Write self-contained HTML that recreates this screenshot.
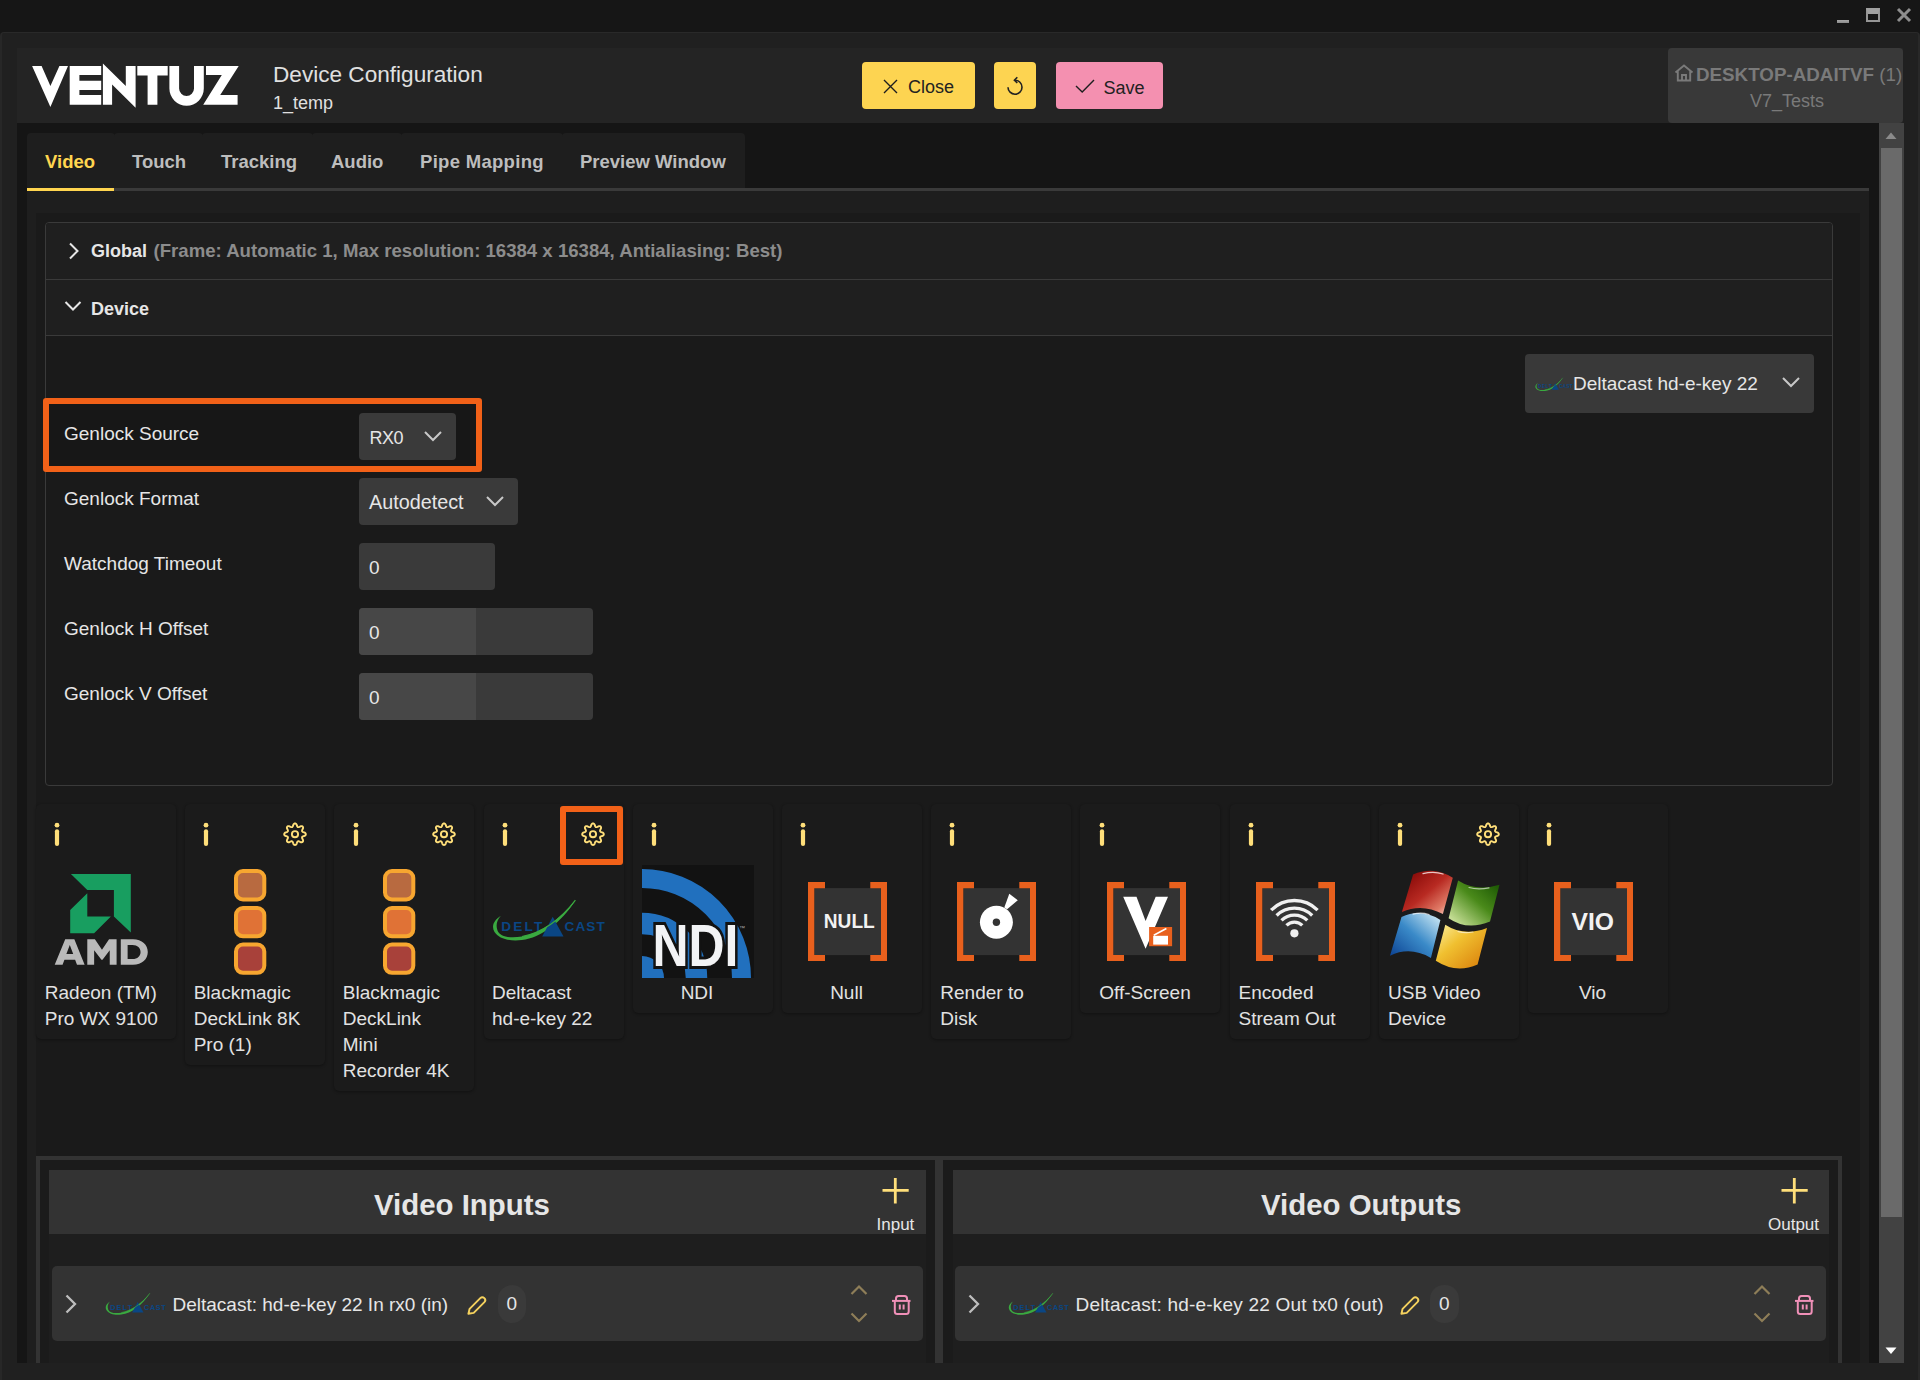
<!DOCTYPE html>
<html><head><meta charset="utf-8">
<style>
*{box-sizing:border-box;margin:0;padding:0}
html,body{width:1920px;height:1380px;overflow:hidden;background:#161616;font-family:"Liberation Sans",sans-serif;color:#e6e6e6}
.a{position:absolute}
.t{position:absolute;white-space:nowrap;line-height:1}
.card{background:#1b1b1b;border-radius:5px;box-shadow:0 1px 3px rgba(0,0,0,0.35)}
.lbl{position:absolute;white-space:nowrap;font-size:19px;line-height:26px;color:#e2e2e2}
</style></head><body>
<!-- window frame -->
<div class="a" style="left:0;top:32px;width:1920px;height:1348px;background:#202020;border-radius:4px 4px 0 0;border-left:2px solid #272727;border-right:2px solid #282828;border-top:1px solid #292929"></div>
<!-- header -->
<div class="a" style="left:17px;top:48px;width:1886px;height:75px;background:#242424"></div>
<!-- dark viewer -->
<div class="a" style="left:17px;top:123px;width:1862px;height:1240px;background:#151515"></div>
<!-- tab content bg -->
<div class="a" style="left:27px;top:191px;width:1842px;height:1172px;background:#1e1e1e"></div>
<!-- content panel -->
<div class="a" style="left:36px;top:213px;width:1824px;height:1150px;background:#1a1a1a"></div>
<!-- title bar controls -->
<div class="a" style="left:1837px;top:20px;width:12px;height:3px;background:linear-gradient(#a8a8a8,#8a8a8a)"></div>
<div class="a" style="left:1866px;top:8px;width:14px;height:14px;border:2px solid #959595;border-top:6px solid #a0a0a0"></div>
<svg class="a" style="left:1895px;top:6px" width="18" height="18" viewBox="0 0 18 18"><path d="M3 3L15 15M15 3L3 15" stroke="#8e8e8e" stroke-width="3"/></svg>
<!-- VENTUZ logo -->
<svg class="a" style="left:0;top:0" width="260" height="120" viewBox="0 0 260 120">
<g fill="#ffffff">
<polygon points="32.1,66.1 41.6,66.1 50.4,86 59.4,66.1 68,66.1 50.4,107.1"/>
<polygon points="69.7,66.1 101.2,66.1 101.2,75 79.4,75 79.4,80.8 101.2,80.8 101.2,90 79.4,90 79.4,95.1 101.2,95.1 101.2,104.8 69.7,104.8"/>
<polygon points="102.9,63.6 125.8,86 125.8,66.1 135.6,66.1 135.6,107.7 112.1,84.5 112.1,104.8 102.9,104.8"/>
<polygon points="137.3,66.1 167.7,66.1 167.7,75.6 157.4,75.6 157.4,104.8 147.6,104.8 147.6,75.6 137.3,75.6"/>
<path d="M169.4 66.1H179.1V88.5A7.45 7.45 0 0 0 194 88.5V66.1H203.8V88.5A17.2 17.2 0 0 1 169.4 88.5Z"/>
<polygon points="206,66.1 238.7,66.1 220.2,95.1 237.6,95.1 237.6,104.8 203.2,104.8 221.8,75 206,75"/>
</g></svg>
<!-- title -->
<div class="t" style="left:273px;top:64px;font-size:22.6px;color:#e0e0e0">Device Configuration</div>
<div class="t" style="left:273px;top:93.5px;font-size:18px;color:#e0e0e0">1_temp</div>
<!-- buttons -->
<div class="a" style="left:862px;top:62px;width:113px;height:47px;background:#fdd451;border-radius:4px"></div>
<svg class="a" style="left:883px;top:79px" width="15" height="15" viewBox="0 0 15 15"><path d="M1 1L14 14M14 1L1 14" stroke="#1e1e1e" stroke-width="1.4"/></svg>
<div class="t" style="left:908px;top:78px;font-size:18px;color:#222">Close</div>
<div class="a" style="left:994px;top:62px;width:42px;height:47px;background:#fdd451;border-radius:4px"></div>
<svg class="a" style="left:1004.4px;top:76.2px" width="22" height="22" viewBox="0 0 22 22"><path d="M11,4.2 A7,7 0 1 1 4,11.2" fill="none" stroke="#222" stroke-width="1.6"/><path d="M13.3,1.2 L10.4,4.2 L13.3,7" fill="none" stroke="#222" stroke-width="1.6"/></svg>
<div class="a" style="left:1056px;top:62px;width:107px;height:47px;background:#f490b0;border-radius:4px"></div>
<svg class="a" style="left:1074px;top:78px" width="22" height="16" viewBox="0 0 22 16"><path d="M2,8 L8.2,13.9 L20,2" fill="none" stroke="#1e1e1e" stroke-width="1.4"/></svg>
<div class="t" style="left:1103.5px;top:79px;font-size:18px;color:#222">Save</div>
<!-- desktop box -->
<div class="a" style="left:1668px;top:48px;width:235px;height:75px;background:#393939;border-radius:4px 4px 4px 4px"></div>
<svg class="a" style="left:1674px;top:63px" width="20" height="20" viewBox="0 0 20 20"><path d="M1.5 9.5L10 2.5L18.5 9.5M3.8 7.8V17.5H16.2V7.8M8 17.5V12H12V17.5" fill="none" stroke="#7a7a7a" stroke-width="1.9"/></svg>
<div class="t" style="left:1696px;top:65.5px;font-size:18.8px;font-weight:bold;color:#7a7a7a">DESKTOP-ADAITVF <span style="font-weight:normal">(1)</span></div>
<div class="t" style="left:1750px;top:92px;font-size:18px;color:#7a7a7a">V7_Tests</div>
<!-- scrollbar -->
<div class="a" style="left:1879px;top:123px;width:25px;height:1240px;background:#424242"></div>
<div class="a" style="left:1881px;top:148px;width:21px;height:1069px;background:#6a6a6a"></div>
<svg class="a" style="left:1885px;top:132px" width="12" height="8" viewBox="0 0 12 8"><polygon points="6,0.5 11.5,7 0.5,7" fill="#8a8a8a"/></svg>
<svg class="a" style="left:1885px;top:1347px" width="12" height="8" viewBox="0 0 12 8"><polygon points="0.5,0.5 11.5,0.5 6,7" fill="#ffffff"/></svg>
<!-- tabs -->
<div class="a" style="left:27px;top:133px;width:88px;height:55px;background:#1e1e1e;border-radius:4px 4px 0 0"></div>
<div class="a" style="left:114px;top:133px;width:89px;height:55px;background:#1e1e1e;border-radius:4px 4px 0 0"></div>
<div class="a" style="left:202px;top:133px;width:111px;height:55px;background:#1e1e1e;border-radius:4px 4px 0 0"></div>
<div class="a" style="left:312px;top:133px;width:90px;height:55px;background:#1e1e1e;border-radius:4px 4px 0 0"></div>
<div class="a" style="left:401px;top:133px;width:162px;height:55px;background:#1e1e1e;border-radius:4px 4px 0 0"></div>
<div class="a" style="left:562px;top:133px;width:183px;height:55px;background:#1e1e1e;border-radius:4px 4px 0 0"></div>
<div class="a" style="left:27px;top:188px;width:1842px;height:3px;background:#3a3a3a"></div>
<div class="a" style="left:27px;top:188px;width:87px;height:3px;background:#ffd54f"></div>
<div class="t" style="left:45px;top:153px;font-size:18.5px;font-weight:bold;color:#ffd54f">Video</div>
<div class="t" style="left:132px;top:153px;font-size:18.5px;font-weight:bold;color:#bdbdbd">Touch</div>
<div class="t" style="left:221px;top:153px;font-size:18.5px;font-weight:bold;color:#bdbdbd">Tracking</div>
<div class="t" style="left:331px;top:153px;font-size:18.5px;font-weight:bold;color:#bdbdbd">Audio</div>
<div class="t" style="left:420px;top:153px;font-size:18.5px;font-weight:bold;color:#bdbdbd;letter-spacing:0.3px">Pipe Mapping</div>
<div class="t" style="left:580px;top:153px;font-size:18.5px;font-weight:bold;color:#bdbdbd">Preview Window</div>

<!-- global/device box -->
<div class="a" style="left:45px;top:222px;width:1788px;height:564px;border:1px solid #3a3a3a;border-radius:4px;background:#1a1a1a;overflow:hidden">
  <div class="a" style="left:0;top:0;width:1786px;height:57px;background:#1f1f1f;border-bottom:1px solid #3a3a3a"></div>
  <div class="a" style="left:0;top:57px;width:1786px;height:56px;background:#1f1f1f;border-bottom:1px solid #3a3a3a"></div>
</div>
<svg class="a" style="left:66px;top:242px" width="16" height="18" viewBox="0 0 16 18"><path d="M4 1.5L11.5 9L4 16.5" fill="none" stroke="#e6e6e6" stroke-width="2"/></svg>
<div class="t" style="left:91px;top:242px;font-size:18px;font-weight:bold;color:#e6e6e6">Global <span style="color:#8c8c8c;font-size:18.6px;margin-left:1.5px">(Frame: Automatic 1, Max resolution: 16384 x 16384, Antialiasing: Best)</span></div>
<svg class="a" style="left:63px;top:298px" width="20" height="16" viewBox="0 0 20 16"><path d="M2.5 4L10 11.5L17.5 4" fill="none" stroke="#e6e6e6" stroke-width="2"/></svg>
<div class="t" style="left:91px;top:300px;font-size:18px;font-weight:bold;color:#e6e6e6">Device</div>
<!-- device dropdown -->
<div class="a" style="left:1525px;top:354px;width:289px;height:59px;background:#393939;border-radius:4px"></div>
<svg class="a" style="left:1532.5px;top:376.5px" width="40" height="14.7" viewBox="0 0 120 44"><use href="#dlogo"/></svg>
<div class="t" style="left:1573px;top:374px;font-size:19px;color:#e6e6e6">Deltacast hd-e-key 22</div>
<svg class="a" style="left:1781px;top:375px" width="20" height="14" viewBox="0 0 20 14"><path d="M2 3L10 11L18 3" fill="none" stroke="#c8c8c8" stroke-width="2"/></svg>
<!-- form rows -->
<div class="a" style="left:43px;top:398px;width:439px;height:74px;border:6px solid #f26118;border-radius:3px;background:#171717"></div>
<div class="t" style="left:64px;top:424px;font-size:19px;color:#e6e6e6">Genlock Source</div>
<div class="a" style="left:359px;top:413px;width:97px;height:47px;background:#3a3a3a;border-radius:4px"></div>
<div class="t" style="left:369.5px;top:429px;font-size:18px;color:#e6e6e6;letter-spacing:-0.5px">RX0</div>
<svg class="a" style="left:423px;top:429px" width="20" height="14" viewBox="0 0 20 14"><path d="M2 3L10 11L18 3" fill="none" stroke="#c8c8c8" stroke-width="2"/></svg>

<div class="t" style="left:64px;top:489px;font-size:19px;color:#e6e6e6">Genlock Format</div>
<div class="a" style="left:359px;top:478px;width:159px;height:47px;background:#3a3a3a;border-radius:4px"></div>
<div class="t" style="left:369px;top:493px;font-size:19.8px;color:#e6e6e6">Autodetect</div>
<svg class="a" style="left:485px;top:494px" width="20" height="14" viewBox="0 0 20 14"><path d="M2 3L10 11L18 3" fill="none" stroke="#c8c8c8" stroke-width="2"/></svg>

<div class="t" style="left:64px;top:554px;font-size:19px;color:#e6e6e6">Watchdog Timeout</div>
<div class="a" style="left:359px;top:543px;width:136px;height:47px;background:#3a3a3a;border-radius:4px"></div>
<div class="t" style="left:369px;top:558px;font-size:19px;color:#e6e6e6">0</div>

<div class="t" style="left:64px;top:619px;font-size:19px;color:#e6e6e6">Genlock H Offset</div>
<div class="a" style="left:359px;top:608px;width:234px;height:47px;background:#3a3a3a;border-radius:4px;overflow:hidden"><div class="a" style="left:0;top:0;width:117px;height:47px;background:#474747"></div></div>
<div class="t" style="left:369px;top:623px;font-size:19px;color:#e6e6e6">0</div>

<div class="t" style="left:64px;top:684px;font-size:19px;color:#e6e6e6">Genlock V Offset</div>
<div class="a" style="left:359px;top:673px;width:234px;height:47px;background:#3a3a3a;border-radius:4px;overflow:hidden"><div class="a" style="left:0;top:0;width:117px;height:47px;background:#474747"></div></div>
<div class="t" style="left:369px;top:688px;font-size:19px;color:#e6e6e6">0</div>

<div class="a card" style="left:36.0px;top:804px;width:140px;height:235px"></div>
<svg class="a" style="left:53.2px;top:819px" width="8" height="30" viewBox="0 0 8 30"><circle cx="4" cy="6.2" r="2.4" fill="#ffdf7a"/><line x1="4" y1="12.3" x2="4" y2="25" stroke="#ffdf7a" stroke-width="4.2" stroke-linecap="round"/></svg>
<div class="a card" style="left:185.2px;top:804px;width:140px;height:261px"></div>
<svg class="a" style="left:202.4px;top:819px" width="8" height="30" viewBox="0 0 8 30"><circle cx="4" cy="6.2" r="2.4" fill="#ffdf7a"/><line x1="4" y1="12.3" x2="4" y2="25" stroke="#ffdf7a" stroke-width="4.2" stroke-linecap="round"/></svg>
<svg class="a" style="left:280.6px;top:820px" width="28" height="28" viewBox="0 0 28 28"><path d="M14.00,3.40 L14.53,3.50 L15.03,3.78 L15.47,4.27 L15.80,5.13 L16.06,5.99 L16.33,6.51 L16.62,6.87 L16.95,7.09 L17.33,7.16 L17.79,7.11 L18.35,6.94 L19.14,6.51 L19.98,6.13 L20.64,6.11 L21.20,6.26 L21.64,6.56 L21.94,7.00 L22.09,7.56 L22.07,8.22 L21.69,9.06 L21.26,9.85 L21.09,10.41 L21.04,10.87 L21.11,11.25 L21.33,11.58 L21.69,11.87 L22.21,12.14 L23.07,12.40 L23.93,12.73 L24.42,13.17 L24.70,13.67 L24.80,14.20 L24.70,14.73 L24.42,15.23 L23.93,15.67 L23.07,16.00 L22.21,16.26 L21.69,16.53 L21.33,16.82 L21.11,17.15 L21.04,17.53 L21.09,17.99 L21.26,18.55 L21.69,19.34 L22.07,20.18 L22.09,20.84 L21.94,21.40 L21.64,21.84 L21.20,22.14 L20.64,22.29 L19.98,22.27 L19.14,21.89 L18.35,21.46 L17.79,21.29 L17.33,21.24 L16.95,21.31 L16.62,21.53 L16.33,21.89 L16.06,22.41 L15.80,23.27 L15.47,24.13 L15.03,24.62 L14.53,24.90 L14.00,25.00 L13.47,24.90 L12.97,24.62 L12.53,24.13 L12.20,23.27 L11.94,22.41 L11.67,21.89 L11.38,21.53 L11.05,21.31 L10.67,21.24 L10.21,21.29 L9.65,21.46 L8.86,21.89 L8.02,22.27 L7.36,22.29 L6.80,22.14 L6.36,21.84 L6.06,21.40 L5.91,20.84 L5.93,20.18 L6.31,19.34 L6.74,18.55 L6.91,17.99 L6.96,17.53 L6.89,17.15 L6.67,16.82 L6.31,16.53 L5.79,16.26 L4.93,16.00 L4.07,15.67 L3.58,15.23 L3.30,14.73 L3.20,14.20 L3.30,13.67 L3.58,13.17 L4.07,12.73 L4.93,12.40 L5.79,12.14 L6.31,11.87 L6.67,11.58 L6.89,11.25 L6.96,10.87 L6.91,10.41 L6.74,9.85 L6.31,9.06 L5.93,8.22 L5.91,7.56 L6.06,7.00 L6.36,6.56 L6.80,6.26 L7.36,6.11 L8.02,6.13 L8.86,6.51 L9.65,6.94 L10.21,7.11 L10.67,7.16 L11.05,7.09 L11.38,6.87 L11.67,6.51 L11.94,5.99 L12.20,5.13 L12.53,4.27 L12.97,3.78 L13.47,3.50Z" fill="none" stroke="#ffdf7a" stroke-width="1.9" stroke-linejoin="round"/><circle cx="14" cy="14.2" r="3.1" fill="none" stroke="#ffdf7a" stroke-width="1.9"/></svg>
<div class="a card" style="left:334.4px;top:804px;width:140px;height:287px"></div>
<svg class="a" style="left:351.6px;top:819px" width="8" height="30" viewBox="0 0 8 30"><circle cx="4" cy="6.2" r="2.4" fill="#ffdf7a"/><line x1="4" y1="12.3" x2="4" y2="25" stroke="#ffdf7a" stroke-width="4.2" stroke-linecap="round"/></svg>
<svg class="a" style="left:429.8px;top:820px" width="28" height="28" viewBox="0 0 28 28"><path d="M14.00,3.40 L14.53,3.50 L15.03,3.78 L15.47,4.27 L15.80,5.13 L16.06,5.99 L16.33,6.51 L16.62,6.87 L16.95,7.09 L17.33,7.16 L17.79,7.11 L18.35,6.94 L19.14,6.51 L19.98,6.13 L20.64,6.11 L21.20,6.26 L21.64,6.56 L21.94,7.00 L22.09,7.56 L22.07,8.22 L21.69,9.06 L21.26,9.85 L21.09,10.41 L21.04,10.87 L21.11,11.25 L21.33,11.58 L21.69,11.87 L22.21,12.14 L23.07,12.40 L23.93,12.73 L24.42,13.17 L24.70,13.67 L24.80,14.20 L24.70,14.73 L24.42,15.23 L23.93,15.67 L23.07,16.00 L22.21,16.26 L21.69,16.53 L21.33,16.82 L21.11,17.15 L21.04,17.53 L21.09,17.99 L21.26,18.55 L21.69,19.34 L22.07,20.18 L22.09,20.84 L21.94,21.40 L21.64,21.84 L21.20,22.14 L20.64,22.29 L19.98,22.27 L19.14,21.89 L18.35,21.46 L17.79,21.29 L17.33,21.24 L16.95,21.31 L16.62,21.53 L16.33,21.89 L16.06,22.41 L15.80,23.27 L15.47,24.13 L15.03,24.62 L14.53,24.90 L14.00,25.00 L13.47,24.90 L12.97,24.62 L12.53,24.13 L12.20,23.27 L11.94,22.41 L11.67,21.89 L11.38,21.53 L11.05,21.31 L10.67,21.24 L10.21,21.29 L9.65,21.46 L8.86,21.89 L8.02,22.27 L7.36,22.29 L6.80,22.14 L6.36,21.84 L6.06,21.40 L5.91,20.84 L5.93,20.18 L6.31,19.34 L6.74,18.55 L6.91,17.99 L6.96,17.53 L6.89,17.15 L6.67,16.82 L6.31,16.53 L5.79,16.26 L4.93,16.00 L4.07,15.67 L3.58,15.23 L3.30,14.73 L3.20,14.20 L3.30,13.67 L3.58,13.17 L4.07,12.73 L4.93,12.40 L5.79,12.14 L6.31,11.87 L6.67,11.58 L6.89,11.25 L6.96,10.87 L6.91,10.41 L6.74,9.85 L6.31,9.06 L5.93,8.22 L5.91,7.56 L6.06,7.00 L6.36,6.56 L6.80,6.26 L7.36,6.11 L8.02,6.13 L8.86,6.51 L9.65,6.94 L10.21,7.11 L10.67,7.16 L11.05,7.09 L11.38,6.87 L11.67,6.51 L11.94,5.99 L12.20,5.13 L12.53,4.27 L12.97,3.78 L13.47,3.50Z" fill="none" stroke="#ffdf7a" stroke-width="1.9" stroke-linejoin="round"/><circle cx="14" cy="14.2" r="3.1" fill="none" stroke="#ffdf7a" stroke-width="1.9"/></svg>
<div class="a card" style="left:483.6px;top:804px;width:140px;height:235px"></div>
<svg class="a" style="left:500.8px;top:819px" width="8" height="30" viewBox="0 0 8 30"><circle cx="4" cy="6.2" r="2.4" fill="#ffdf7a"/><line x1="4" y1="12.3" x2="4" y2="25" stroke="#ffdf7a" stroke-width="4.2" stroke-linecap="round"/></svg>
<svg class="a" style="left:579.0px;top:820px" width="28" height="28" viewBox="0 0 28 28"><path d="M14.00,3.40 L14.53,3.50 L15.03,3.78 L15.47,4.27 L15.80,5.13 L16.06,5.99 L16.33,6.51 L16.62,6.87 L16.95,7.09 L17.33,7.16 L17.79,7.11 L18.35,6.94 L19.14,6.51 L19.98,6.13 L20.64,6.11 L21.20,6.26 L21.64,6.56 L21.94,7.00 L22.09,7.56 L22.07,8.22 L21.69,9.06 L21.26,9.85 L21.09,10.41 L21.04,10.87 L21.11,11.25 L21.33,11.58 L21.69,11.87 L22.21,12.14 L23.07,12.40 L23.93,12.73 L24.42,13.17 L24.70,13.67 L24.80,14.20 L24.70,14.73 L24.42,15.23 L23.93,15.67 L23.07,16.00 L22.21,16.26 L21.69,16.53 L21.33,16.82 L21.11,17.15 L21.04,17.53 L21.09,17.99 L21.26,18.55 L21.69,19.34 L22.07,20.18 L22.09,20.84 L21.94,21.40 L21.64,21.84 L21.20,22.14 L20.64,22.29 L19.98,22.27 L19.14,21.89 L18.35,21.46 L17.79,21.29 L17.33,21.24 L16.95,21.31 L16.62,21.53 L16.33,21.89 L16.06,22.41 L15.80,23.27 L15.47,24.13 L15.03,24.62 L14.53,24.90 L14.00,25.00 L13.47,24.90 L12.97,24.62 L12.53,24.13 L12.20,23.27 L11.94,22.41 L11.67,21.89 L11.38,21.53 L11.05,21.31 L10.67,21.24 L10.21,21.29 L9.65,21.46 L8.86,21.89 L8.02,22.27 L7.36,22.29 L6.80,22.14 L6.36,21.84 L6.06,21.40 L5.91,20.84 L5.93,20.18 L6.31,19.34 L6.74,18.55 L6.91,17.99 L6.96,17.53 L6.89,17.15 L6.67,16.82 L6.31,16.53 L5.79,16.26 L4.93,16.00 L4.07,15.67 L3.58,15.23 L3.30,14.73 L3.20,14.20 L3.30,13.67 L3.58,13.17 L4.07,12.73 L4.93,12.40 L5.79,12.14 L6.31,11.87 L6.67,11.58 L6.89,11.25 L6.96,10.87 L6.91,10.41 L6.74,9.85 L6.31,9.06 L5.93,8.22 L5.91,7.56 L6.06,7.00 L6.36,6.56 L6.80,6.26 L7.36,6.11 L8.02,6.13 L8.86,6.51 L9.65,6.94 L10.21,7.11 L10.67,7.16 L11.05,7.09 L11.38,6.87 L11.67,6.51 L11.94,5.99 L12.20,5.13 L12.53,4.27 L12.97,3.78 L13.47,3.50Z" fill="none" stroke="#ffdf7a" stroke-width="1.9" stroke-linejoin="round"/><circle cx="14" cy="14.2" r="3.1" fill="none" stroke="#ffdf7a" stroke-width="1.9"/></svg>
<div class="a card" style="left:632.8px;top:804px;width:140px;height:209px"></div>
<svg class="a" style="left:650.0px;top:819px" width="8" height="30" viewBox="0 0 8 30"><circle cx="4" cy="6.2" r="2.4" fill="#ffdf7a"/><line x1="4" y1="12.3" x2="4" y2="25" stroke="#ffdf7a" stroke-width="4.2" stroke-linecap="round"/></svg>
<div class="a card" style="left:782.0px;top:804px;width:140px;height:209px"></div>
<svg class="a" style="left:799.2px;top:819px" width="8" height="30" viewBox="0 0 8 30"><circle cx="4" cy="6.2" r="2.4" fill="#ffdf7a"/><line x1="4" y1="12.3" x2="4" y2="25" stroke="#ffdf7a" stroke-width="4.2" stroke-linecap="round"/></svg>
<div class="a card" style="left:931.2px;top:804px;width:140px;height:235px"></div>
<svg class="a" style="left:948.4px;top:819px" width="8" height="30" viewBox="0 0 8 30"><circle cx="4" cy="6.2" r="2.4" fill="#ffdf7a"/><line x1="4" y1="12.3" x2="4" y2="25" stroke="#ffdf7a" stroke-width="4.2" stroke-linecap="round"/></svg>
<div class="a card" style="left:1080.4px;top:804px;width:140px;height:209px"></div>
<svg class="a" style="left:1097.6px;top:819px" width="8" height="30" viewBox="0 0 8 30"><circle cx="4" cy="6.2" r="2.4" fill="#ffdf7a"/><line x1="4" y1="12.3" x2="4" y2="25" stroke="#ffdf7a" stroke-width="4.2" stroke-linecap="round"/></svg>
<div class="a card" style="left:1229.6px;top:804px;width:140px;height:235px"></div>
<svg class="a" style="left:1246.8px;top:819px" width="8" height="30" viewBox="0 0 8 30"><circle cx="4" cy="6.2" r="2.4" fill="#ffdf7a"/><line x1="4" y1="12.3" x2="4" y2="25" stroke="#ffdf7a" stroke-width="4.2" stroke-linecap="round"/></svg>
<div class="a card" style="left:1378.8px;top:804px;width:140px;height:235px"></div>
<svg class="a" style="left:1396.0px;top:819px" width="8" height="30" viewBox="0 0 8 30"><circle cx="4" cy="6.2" r="2.4" fill="#ffdf7a"/><line x1="4" y1="12.3" x2="4" y2="25" stroke="#ffdf7a" stroke-width="4.2" stroke-linecap="round"/></svg>
<svg class="a" style="left:1474.2px;top:820px" width="28" height="28" viewBox="0 0 28 28"><path d="M14.00,3.40 L14.53,3.50 L15.03,3.78 L15.47,4.27 L15.80,5.13 L16.06,5.99 L16.33,6.51 L16.62,6.87 L16.95,7.09 L17.33,7.16 L17.79,7.11 L18.35,6.94 L19.14,6.51 L19.98,6.13 L20.64,6.11 L21.20,6.26 L21.64,6.56 L21.94,7.00 L22.09,7.56 L22.07,8.22 L21.69,9.06 L21.26,9.85 L21.09,10.41 L21.04,10.87 L21.11,11.25 L21.33,11.58 L21.69,11.87 L22.21,12.14 L23.07,12.40 L23.93,12.73 L24.42,13.17 L24.70,13.67 L24.80,14.20 L24.70,14.73 L24.42,15.23 L23.93,15.67 L23.07,16.00 L22.21,16.26 L21.69,16.53 L21.33,16.82 L21.11,17.15 L21.04,17.53 L21.09,17.99 L21.26,18.55 L21.69,19.34 L22.07,20.18 L22.09,20.84 L21.94,21.40 L21.64,21.84 L21.20,22.14 L20.64,22.29 L19.98,22.27 L19.14,21.89 L18.35,21.46 L17.79,21.29 L17.33,21.24 L16.95,21.31 L16.62,21.53 L16.33,21.89 L16.06,22.41 L15.80,23.27 L15.47,24.13 L15.03,24.62 L14.53,24.90 L14.00,25.00 L13.47,24.90 L12.97,24.62 L12.53,24.13 L12.20,23.27 L11.94,22.41 L11.67,21.89 L11.38,21.53 L11.05,21.31 L10.67,21.24 L10.21,21.29 L9.65,21.46 L8.86,21.89 L8.02,22.27 L7.36,22.29 L6.80,22.14 L6.36,21.84 L6.06,21.40 L5.91,20.84 L5.93,20.18 L6.31,19.34 L6.74,18.55 L6.91,17.99 L6.96,17.53 L6.89,17.15 L6.67,16.82 L6.31,16.53 L5.79,16.26 L4.93,16.00 L4.07,15.67 L3.58,15.23 L3.30,14.73 L3.20,14.20 L3.30,13.67 L3.58,13.17 L4.07,12.73 L4.93,12.40 L5.79,12.14 L6.31,11.87 L6.67,11.58 L6.89,11.25 L6.96,10.87 L6.91,10.41 L6.74,9.85 L6.31,9.06 L5.93,8.22 L5.91,7.56 L6.06,7.00 L6.36,6.56 L6.80,6.26 L7.36,6.11 L8.02,6.13 L8.86,6.51 L9.65,6.94 L10.21,7.11 L10.67,7.16 L11.05,7.09 L11.38,6.87 L11.67,6.51 L11.94,5.99 L12.20,5.13 L12.53,4.27 L12.97,3.78 L13.47,3.50Z" fill="none" stroke="#ffdf7a" stroke-width="1.9" stroke-linejoin="round"/><circle cx="14" cy="14.2" r="3.1" fill="none" stroke="#ffdf7a" stroke-width="1.9"/></svg>
<div class="a card" style="left:1528.0px;top:804px;width:140px;height:209px"></div>
<svg class="a" style="left:1545.2px;top:819px" width="8" height="30" viewBox="0 0 8 30"><circle cx="4" cy="6.2" r="2.4" fill="#ffdf7a"/><line x1="4" y1="12.3" x2="4" y2="25" stroke="#ffdf7a" stroke-width="4.2" stroke-linecap="round"/></svg>
<svg width="0" height="0" style="position:absolute">
<defs>
<symbol id="dlogo" viewBox="0 0 120 44">
<path d="M14.9,25.7 C8,30 5,36 8.5,42 C13,49 24,51.5 36,50 C55,47.5 75,33 89.4,10.2 C73,30 55,43 36,46.5 C24,48.5 14,47 11.5,40.5 C9.5,35 11,30 14.9,25.7Z" transform="translate(0,-8)" fill="#3aaa40"/>
<polygon points="66.7,18.7 56.2,38.4 77.5,38.4" fill="#0a4684"/>
<text x="15.2" y="33" font-family="Liberation Sans" font-size="13.6" font-weight="bold" fill="#0a4684" textLength="41" lengthAdjust="spacing">DELT</text>
<text x="78.5" y="33" font-family="Liberation Sans" font-size="13.6" font-weight="bold" fill="#0a4684" textLength="40.3" lengthAdjust="spacing">CAST</text>
<path d="M89.4,2.2 C75,22 55,35 36,38.5" fill="none" stroke="#3aaa40" stroke-width="1.2"/>
</symbol>
<symbol id="brk" viewBox="0 0 79.3 79.3">
<rect x="6.3" y="6.1" width="67" height="67" fill="#333333"/>
<path d="M0,0H17V6.3H6.3V73H17V79.3H0Z" fill="#e8601d"/>
<path d="M79.3,0H62.3V6.3H73V73H62.3V79.3H79.3Z" fill="#e8601d"/>
</symbol>
</defs>
</svg>
<!-- 1 AMD -->
<svg class="a" style="left:50px;top:865px" width="105" height="105" viewBox="0 0 105 105">
<polygon points="20.9,9 80.8,9 80.8,67.4 63.9,51.4 63.9,25.1 37.3,25.1" fill="#189e60"/>
<polygon points="37.3,28.3 37.3,51.4 60.9,51.4 44.1,68.3 20.2,68.3 20.2,44.9" fill="#189e60"/>
<g transform="scale(0.0761)" fill="#b9b9b9">
<path d="M62,1310L200,975H320L455,1310H355L330,1245H190L165,1310ZM215,1170H305L260,1050Z" fill-rule="evenodd"/>
<path d="M490,1310V975H590L683,1115L776,975H875V1310H785V1120L690,1245H676L580,1120V1310Z"/>
<path d="M930,975H1090C1210,975 1285,1050 1285,1142C1285,1235 1210,1310 1090,1310H930ZM1020,1050V1235H1085C1150,1235 1190,1195 1190,1142C1190,1090 1150,1050 1085,1050Z" fill-rule="evenodd"/>
</g>
</svg>
<!-- 2,3 Blackmagic -->
<svg class="a" style="left:232px;top:866.5px" width="36" height="110" viewBox="0 0 36 110">
<rect x="4" y="4.1" width="28.3" height="28.4" rx="7" fill="#b86a40" stroke="#f7a630" stroke-width="4"/>
<rect x="4" y="41" width="28.3" height="28.3" rx="7" fill="#e07236" stroke="#f7a630" stroke-width="4"/>
<rect x="4" y="77.5" width="28.3" height="28.3" rx="7" fill="#a8413a" stroke="#f7a630" stroke-width="4"/>
</svg>
<svg class="a" style="left:381.2px;top:866.5px" width="36" height="110" viewBox="0 0 36 110">
<rect x="4" y="4.1" width="28.3" height="28.4" rx="7" fill="#b86a40" stroke="#f7a630" stroke-width="4"/>
<rect x="4" y="41" width="28.3" height="28.3" rx="7" fill="#e07236" stroke="#f7a630" stroke-width="4"/>
<rect x="4" y="77.5" width="28.3" height="28.3" rx="7" fill="#a8413a" stroke="#f7a630" stroke-width="4"/>
</svg>
<!-- 4 Deltacast -->
<svg class="a" style="left:486px;top:898px" width="120" height="44"><use href="#dlogo"/></svg>
<!-- 5 NDI -->
<svg class="a" style="left:642px;top:865px" width="112" height="113" viewBox="0 0 112 113">
<rect width="112" height="113" fill="#121212"/>
<g fill="none" stroke="#2170be">
<path d="M0,13.5 A99.5,99.5 0 0 1 99.5,113" stroke-width="19"/>
<path d="M0,58.5 A54.5,54.5 0 0 1 54.5,113" stroke-width="21.5"/>
</g>
<path d="M0,91 A22,22 0 0 1 22,113 H0Z" fill="#2170be"/>
<text x="10.5" y="101.2" font-family="Liberation Sans" font-weight="bold" font-size="58.5" fill="#f2f3f5" stroke="#121212" stroke-width="6" paint-order="stroke" textLength="86" lengthAdjust="spacingAndGlyphs">NDI</text>
<text x="97" y="65" font-family="Liberation Sans" font-size="6" fill="#aaa">™</text>
</svg>
<!-- 6 Null -->
<svg class="a" style="left:808px;top:882px" width="79.3" height="79.3"><use href="#brk"/>
<text x="15.8" y="46" font-family="Liberation Sans" font-weight="bold" font-size="19.5" fill="#f2f2f2" textLength="51" lengthAdjust="spacingAndGlyphs">NULL</text></svg>
<!-- 7 Render to disk -->
<svg class="a" style="left:957px;top:882px" width="79.3" height="79.3"><use href="#brk"/>
<circle cx="39.4" cy="40.2" r="16.5" fill="#fff"/><circle cx="39.4" cy="40.2" r="3.7" fill="#333"/>
<polygon points="47.3,25.4 52.3,11.7 60.8,18.3 50.1,27.3" fill="#fff"/></svg>
<!-- 8 Off-screen -->
<svg class="a" style="left:1107px;top:882px" width="79.3" height="79.3"><use href="#brk"/>
<polygon points="16.2,14.7 29.5,14.7 38.6,39 48.7,14.7 61,14.7 38.6,66.7" fill="#fff"/>
<rect x="42.1" y="45" width="23" height="19.2" fill="#e8601d"/>
<rect x="46.2" y="53.8" width="14.8" height="8.8" fill="#fff"/>
<line x1="46.8" y1="53.2" x2="59.4" y2="46.5" stroke="#fff" stroke-width="1.6"/></svg>
<!-- 9 Encoded -->
<svg class="a" style="left:1256px;top:882px" width="79.3" height="79.3"><use href="#brk"/>
<g fill="none" stroke="#f0f0f0" stroke-width="3.3">
<path d="M15.2,28.1 A32.8,32.8 0 0 1 61.6,28.1"/>
<path d="M20.6,33.5 A25.2,25.2 0 0 1 56.2,33.5"/>
<path d="M25.5,38.4 A18.3,18.3 0 0 1 51.3,38.4"/>
<path d="M30.5,43.4 A11.1,11.1 0 0 1 46.3,43.4"/>
</g>
<circle cx="38.4" cy="51.3" r="4.1" fill="#f0f0f0"/></svg>
<!-- 10 Windows -->
<svg class="a" style="left:1385px;top:862px" width="120" height="114" viewBox="0 0 120 114">
<defs>
<linearGradient id="wr" x1="0" y1="0" x2="1" y2="1"><stop offset="0" stop-color="#7a0000"/><stop offset="0.5" stop-color="#b82a22"/><stop offset="0.8" stop-color="#e07a66"/><stop offset="1" stop-color="#fbe0d8"/></linearGradient>
<linearGradient id="wg" x1="1" y1="0" x2="0" y2="1"><stop offset="0" stop-color="#155000"/><stop offset="0.45" stop-color="#4a8a1a"/><stop offset="1" stop-color="#e0f0b0"/></linearGradient>
<linearGradient id="wb" x1="0" y1="1" x2="1" y2="0"><stop offset="0" stop-color="#0a3f90"/><stop offset="0.5" stop-color="#3a8ac8"/><stop offset="1" stop-color="#d8f0f8"/></linearGradient>
<linearGradient id="wy" x1="0" y1="0" x2="1" y2="1"><stop offset="0" stop-color="#fbf0a0"/><stop offset="0.4" stop-color="#f0c030"/><stop offset="1" stop-color="#d87a08"/></linearGradient>
</defs>
<path d="M28.1,12.4 Q48.8,3.5 67.8,15.7 L57.9,52.1 Q37,41 16.9,50 Z" fill="url(#wr)"/>
<path d="M73.1,18.6 Q91,30 114.5,22.7 L105,59.5 Q82,69 63.6,56.2 Z" fill="url(#wg)"/>
<path d="M16.5,55 Q36,46 55.4,57.9 L45.9,95.9 Q25,84 5,93.8 Z" fill="url(#wb)"/>
<path d="M60.3,62.8 Q79,75 102,66.1 L92.6,102.5 Q71,112 50.8,98.8 Z" fill="url(#wy)"/>
<g fill="none" stroke="#ffffff" stroke-linecap="round">
<path d="M38,11.6 Q49,9 58,12" stroke-width="1.3" opacity="0.75"/>
<path d="M84,25.5 Q93,28 104,25.8" stroke-width="1.2" opacity="0.6"/>
<path d="M28,52.2 Q36,50 44,52.5" stroke-width="1.2" opacity="0.7"/>
<path d="M73,69.5 Q80,71.5 88,70" stroke-width="1.2" opacity="0.6"/>
</g>
</svg>
<!-- 11 Vio -->
<svg class="a" style="left:1554px;top:882px" width="79.3" height="79.3"><use href="#brk"/>
<text x="17.5" y="47.5" font-family="Liberation Sans" font-weight="bold" font-size="24" fill="#f2f2f2" textLength="42.5" lengthAdjust="spacingAndGlyphs">VIO</text></svg>
<!-- labels -->
<div class="lbl" style="left:44.8px;top:980.4px">Radeon (TM)<br>Pro WX 9100</div>
<div class="lbl" style="left:193.7px;top:980.4px">Blackmagic<br>DeckLink 8K<br>Pro (1)</div>
<div class="lbl" style="left:342.8px;top:980.4px">Blackmagic<br>DeckLink<br>Mini<br>Recorder 4K</div>
<div class="lbl" style="left:492.0px;top:980.4px">Deltacast<br>hd-e-key 22</div>
<div class="lbl" style="left:641.0px;top:980.4px;width:112px;text-align:center">NDI</div>
<div class="lbl" style="left:807.0px;top:980.4px;width:79px;text-align:center">Null</div>
<div class="lbl" style="left:940.3px;top:980.4px">Render to<br>Disk</div>
<div class="lbl" style="left:1095.0px;top:980.4px;width:100px;text-align:center">Off-Screen</div>
<div class="lbl" style="left:1238.5px;top:980.4px">Encoded<br>Stream Out</div>
<div class="lbl" style="left:1388.0px;top:980.4px">USB Video<br>Device</div>
<div class="lbl" style="left:1553.0px;top:980.4px;width:79px;text-align:center">Vio</div>
<!-- highlight around gear -->
<div class="a" style="left:560px;top:806px;width:63px;height:59px;border:6px solid #f26118;border-radius:3px"></div>

<!-- video IO panels -->
<div class="a" style="left:36px;top:1156px;width:903px;height:207px;border:4px solid #333;border-bottom:none;background:#1b1b1b"></div>
<div class="a" style="left:939px;top:1156px;width:903px;height:207px;border:4px solid #333;border-bottom:none;background:#1b1b1b"></div>
<div class="a" style="left:49px;top:1170px;width:877px;height:64px;background:#333"></div>
<div class="a" style="left:49px;top:1234px;width:877px;height:129px;background:#1e1e1e"></div>
<div class="a" style="left:953px;top:1170px;width:876px;height:64px;background:#333"></div>
<div class="a" style="left:953px;top:1234px;width:876px;height:129px;background:#1e1e1e"></div>
<div class="t" style="left:374px;top:1190px;font-size:29.4px;font-weight:bold;color:#e6e6e6">Video Inputs</div>
<div class="t" style="left:1261px;top:1190px;font-size:29.4px;font-weight:bold;color:#e6e6e6">Video Outputs</div>
<svg class="a" style="left:880px;top:1175px" width="30" height="30" viewBox="0 0 30 30"><path d="M15.3,3V28.5M2.5,15.3H28.7" stroke="#ffdf7a" stroke-width="2.8" stroke-linecap="butt"/></svg>
<div class="t" style="left:876.5px;top:1215.8px;font-size:17px;color:#e6e6e6">Input</div>
<svg class="a" style="left:1779px;top:1175px" width="30" height="30" viewBox="0 0 30 30"><path d="M15.3,3V28.5M2.5,15.3H28.7" stroke="#ffdf7a" stroke-width="2.8" stroke-linecap="butt"/></svg>
<div class="t" style="left:1768px;top:1215.8px;font-size:17px;color:#e6e6e6">Output</div>
<!-- item rows -->
<div class="a" style="left:52px;top:1266px;width:871px;height:75px;background:#333;border-radius:5px"></div>
<div class="a" style="left:955px;top:1266px;width:871px;height:75px;background:#333;border-radius:5px"></div>
<svg class="a" style="left:62px;top:1292px" width="18" height="24" viewBox="0 0 18 24"><path d="M4.5,3.5L13,12L4.5,20.5" fill="none" stroke="#bdbdbd" stroke-width="2.3"/></svg>
<svg class="a" style="left:965px;top:1292px" width="18" height="24" viewBox="0 0 18 24"><path d="M4.5,3.5L13,12L4.5,20.5" fill="none" stroke="#bdbdbd" stroke-width="2.3"/></svg>
<svg class="a" style="left:102px;top:1292px" width="64.3" height="23.6" viewBox="0 0 120 44"><use href="#dlogo"/></svg>
<svg class="a" style="left:1005px;top:1292px" width="64.3" height="23.6" viewBox="0 0 120 44"><use href="#dlogo"/></svg>
<div class="t" style="left:172.5px;top:1295px;font-size:19px;color:#e6e6e6">Deltacast: hd-e-key 22 In rx0 (in)</div>
<div class="t" style="left:1075.5px;top:1295px;font-size:19px;color:#e6e6e6;letter-spacing:0.2px">Deltacast: hd-e-key 22 Out tx0 (out)</div>
<svg class="a" style="left:465px;top:1294px" width="23" height="23" viewBox="0 0 23 23"><path d="M3.4,19.8 L4.6,14.8 L15.3,4.1 A2.9,2.9 0 0 1 19.4,8.2 L8.7,18.9 Z" fill="none" stroke="#f5d25e" stroke-width="1.9" stroke-linejoin="round"/></svg>
<div class="a" style="left:497.5px;top:1285px;width:28.5px;height:37.5px;background:#3a3a3a;border-radius:14px"></div>
<div class="t" style="left:506.5px;top:1294px;font-size:19px;color:#e6e6e6">0</div>
<svg class="a" style="left:850px;top:1282px" width="20" height="44" viewBox="0 0 20 44"><path d="M1.5,12L9,4.5L16.5,12M1.5,31.5L9,39L16.5,31.5" fill="none" stroke="#8e7e58" stroke-width="2.2"/></svg>
<svg class="a" style="left:890px;top:1294px" width="22" height="22" viewBox="0 0 22 22"><g fill="none" stroke="#f090b8" stroke-width="2"><path d="M2,6.9H20.5"/><path d="M6,6.5V4.5A2.5,2.5 0 0 1 8.5,2H14.5A2.5,2.5 0 0 1 17,4.5V6.5"/><path d="M4.8,7V17.5A2.5,2.5 0 0 0 7.3,20H16.2A2.5,2.5 0 0 0 18.7,17.5V7"/><path d="M9.8,10.5V15.5M13.6,10.5V15.5"/></g></svg>

<svg class="a" style="left:1398px;top:1294px" width="23" height="23" viewBox="0 0 23 23"><path d="M3.4,19.8 L4.6,14.8 L15.3,4.1 A2.9,2.9 0 0 1 19.4,8.2 L8.7,18.9 Z" fill="none" stroke="#f5d25e" stroke-width="1.9" stroke-linejoin="round"/></svg>
<div class="a" style="left:1430px;top:1285px;width:28.5px;height:37.5px;background:#3a3a3a;border-radius:14px"></div>
<div class="t" style="left:1439px;top:1294px;font-size:19px;color:#e6e6e6">0</div>
<svg class="a" style="left:1753px;top:1282px" width="20" height="44" viewBox="0 0 20 44"><path d="M1.5,12L9,4.5L16.5,12M1.5,31.5L9,39L16.5,31.5" fill="none" stroke="#8e7e58" stroke-width="2.2"/></svg>
<svg class="a" style="left:1793px;top:1294px" width="22" height="22" viewBox="0 0 22 22"><g fill="none" stroke="#f090b8" stroke-width="2"><path d="M2,6.9H20.5"/><path d="M6,6.5V4.5A2.5,2.5 0 0 1 8.5,2H14.5A2.5,2.5 0 0 1 17,4.5V6.5"/><path d="M4.8,7V17.5A2.5,2.5 0 0 0 7.3,20H16.2A2.5,2.5 0 0 0 18.7,17.5V7"/><path d="M9.8,10.5V15.5M13.6,10.5V15.5"/></g></svg>

</body></html>
